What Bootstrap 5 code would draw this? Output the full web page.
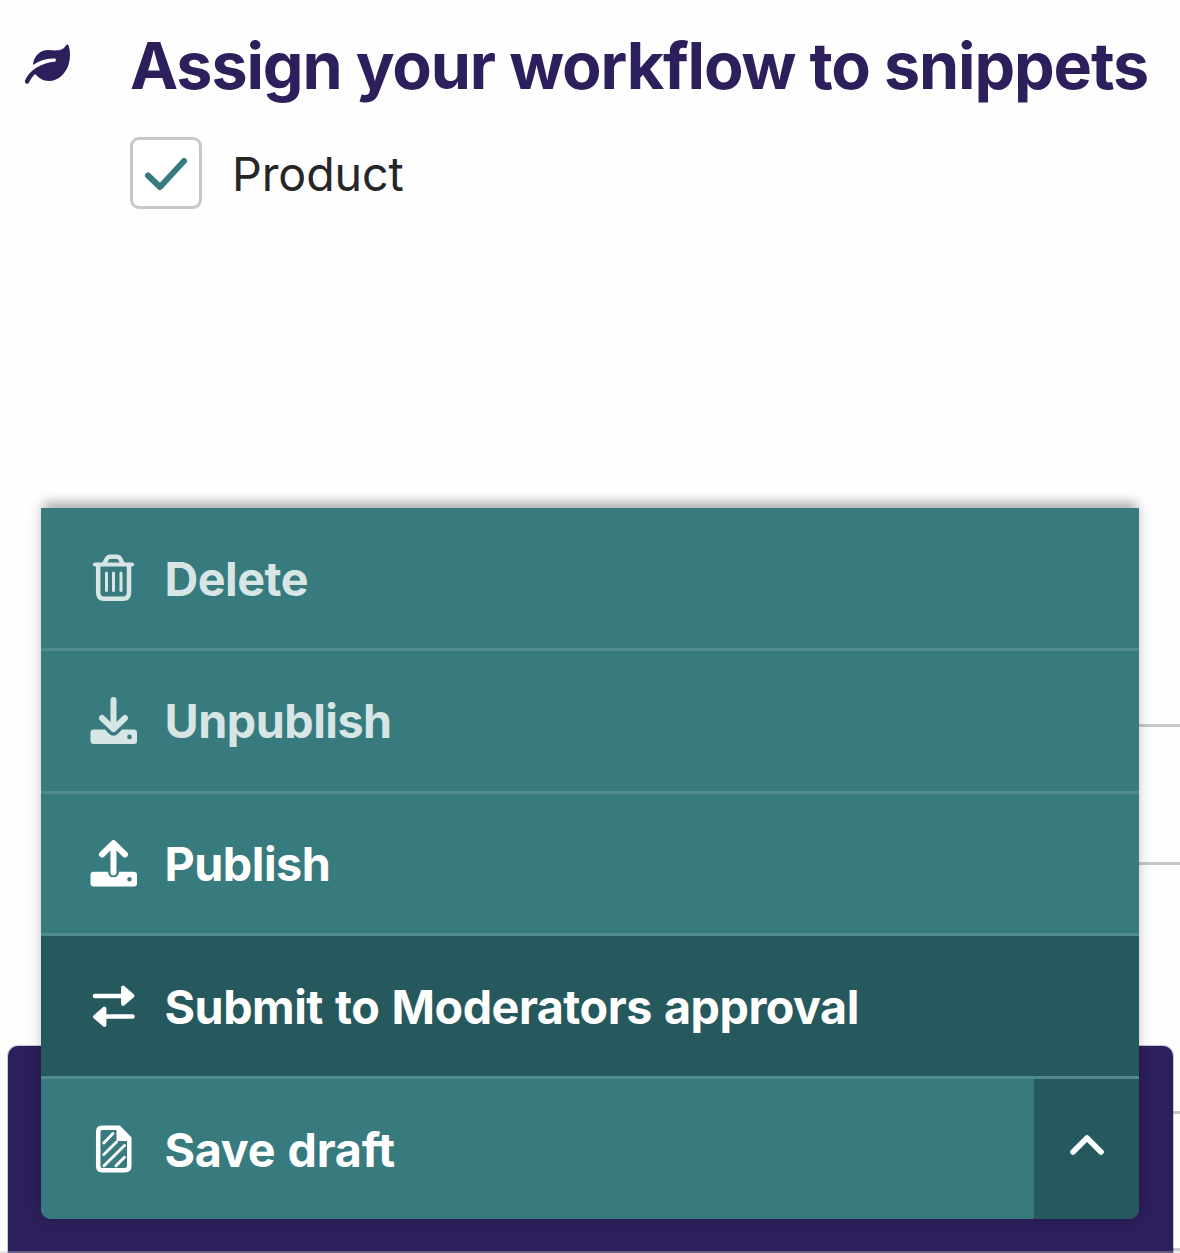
<!DOCTYPE html>
<html lang="en">
<head>
<meta charset="utf-8">
<meta name="viewport" content="width=device-width, initial-scale=1">
<title>Assign your workflow to snippets</title>
<link href="https://cdn.jsdelivr.net/npm/bootstrap@5.3.0/dist/css/bootstrap.min.css" rel="stylesheet">
<style>
  body { font-family: Inter, "Liberation Sans", sans-serif; background: #fefefe; color: #262626; }
  .editor { height: 1253px; }
  .panel-head { padding: 26px 0 0 24px; height: 137px; color: #2c1f5b; }
  .panel-head svg { margin: 17px 58px 0 0; }
  .panel-title { font-size: 64.6px; font-weight: 700; line-height: 80px; letter-spacing: -1.14px; white-space: nowrap; }
  .choice { margin-left: 130px; gap: 30px; height: 72px; }
  .choice-box { width: 72px; height: 72px; border: 3px solid #c8c8c8; border-radius: 9px; background: #fff; }
  .choice-label { font-size: 46.6px; line-height: 72px; padding-top: 2px; letter-spacing: -.1px; }
  .field-rows { margin: 515px 0 0 60px; }
  .field-row { border-top: 3px solid #c8c8c8; }
  .row-a { height: 138px; }
  .row-b { height: 249px; }
  .row-c { height: 137px; }
  .row-d { height: 5px; background: #ececec; }
  .footer-bar { left: 8px; right: 7px; top: 1046px; height: 207px; padding: 0 34px 0 33px; background: #2c1f5b; border-radius: 10px 10px 0 0; box-shadow: 0 0 0 1px rgba(44,31,91,.25); }
  .action-menu { margin-top: -538px; height: 711px; box-shadow: 0 -3px 15px rgba(0,0,0,.16), 0 -10px 10px -3px rgba(0,0,0,.19); border-radius: 0 0 10px 10px; background: #377b7e; }
  .menu-action { height: 142.75px; padding: 0 49px; border: 0; border-bottom: 3px solid #528b8d; background: #377b7e; color: #fff; font-size: 46.7px; font-weight: 650; line-height: 1; text-align: left; gap: 26px; letter-spacing: -.5px; word-spacing: 1.6px; }
  .menu-action.is-off { color: #d7e5e5; }
  .menu-action.is-active { background: #26595d; }
  .menu-action svg { width: 48px; height: 48px; flex: none; }
  .menu-action span { white-space: nowrap; padding: 2px 0 0 .5px; }
  .save-action { height: 140px; border-bottom: 0; border-right: 1px solid #4a7073; border-radius: 0 0 0 10px; flex: 1; }
  .save-action, .save-action span { letter-spacing: -.28px; }
  .toggle-action { width: 105px; height: 140px; border: 0; background: #26595d; border-radius: 0 0 10px 0; padding: 0; }
  .toggle-action svg { margin-top: -8px; }
  .edge-strip { left: 0; bottom: 0; width: 1173px; height: 2px; background: rgba(190,190,190,.38); }
</style>
<script src="https://cdn.jsdelivr.net/npm/bootstrap@5.3.0/dist/js/bootstrap.bundle.min.js"></script>
</head>
<body>
<main class="editor position-relative overflow-hidden">
  <header class="panel-head d-flex align-items-start">
    <svg width="48" height="42" viewBox="0 0 48 42" fill="none" aria-hidden="true">
      <path d="M41.500 3C42.500 1 44.200 .8 44.800 3C46.500 9 46.300 15 45 20C42.500 30 34.500 38 25 38C18.500 38 14.500 34.500 11 31C8 34 6.500 36.500 5 39.500C3.800 42 .2 40.800 1 37.500C5 28 17 19.500 31 18.800C32.300 18.500 32.300 15.800 31 15.600C23 15 15.500 17.500 9 22C9.500 13 16.500 7 24 7C32 7.500 38 8.500 41.500 3Z" fill="currentColor"/>
    </svg>
    <h1 class="panel-title m-0">Assign your workflow to snippets</h1>
  </header>
  <div class="choice d-flex align-items-center">
    <div class="choice-box d-flex" role="checkbox" aria-checked="true" aria-label="Product">
      <svg width="66" height="66" viewBox="0 0 66 66" fill="none" aria-hidden="true"><path d="M15 35.500L27 47L51 21" stroke="#377b7e" stroke-width="6" stroke-linecap="round" stroke-linejoin="round"/></svg>
    </div>
    <div class="choice-label">Product</div>
  </div>
  <div class="field-rows">
    <div class="field-row row-a"></div>
    <div class="field-row row-b"></div>
    <div class="field-row row-c"></div>
    <div class="field-row row-d"></div>
  </div>
  <footer class="footer-bar position-absolute">
    <div class="action-menu d-flex flex-column">
      <button class="menu-action is-off d-flex align-items-center" type="button">
        <svg viewBox="0 0 48 48" fill="none" stroke="currentColor" stroke-linecap="round" stroke-linejoin="round" aria-hidden="true"><path d="M5 10.500H42" stroke-width="4.200"/><path d="M8.200 11V38.500Q8.200 44.800 14 44.800H33Q39 44.800 39 38.500V11M14 10L17 4.500Q18 2.800 20 2.800H27Q29 2.800 30 4.500L33 10" stroke-width="4.500"/><path d="M16.500 19V36.500M23.500 19V36.500M31 19V36.500" stroke-width="3"/></svg>
        <span>Delete</span>
      </button>
      <button class="menu-action is-off d-flex align-items-center" type="button">
        <svg viewBox="0 0 48 48" fill="none" aria-hidden="true"><path fill-rule="evenodd" fill="currentColor" d="M3.500 32.500H15L19 36.800Q23.500 40.500 28 36.800L32 32.500H43.500Q47 32.500 47 35.500V44Q47 47 44 47H3.500Q.5 47 .5 44V35.500Q.5 32.500 3.500 32.500ZM39.500 37.600A2.300 2.300 0 1 0 39.500 42.200A2.300 2.300 0 1 0 39.500 37.600Z"/><path d="M23.500 3V32M12 21L23.500 32.200L35 21" stroke="currentColor" stroke-width="6" stroke-linecap="round" stroke-linejoin="round"/></svg>
        <span>Unpublish</span>
      </button>
      <button class="menu-action d-flex align-items-center" type="button">
        <svg viewBox="0 0 48 48" fill="none" aria-hidden="true"><path fill-rule="evenodd" fill="currentColor" d="M3.500 32.800H18Q18.500 38.300 23.500 38.300Q28.500 38.300 29 32.800H43.500Q47 32.800 47 35.800V44.500Q47 47.500 44 47.500H3.500Q.5 47.500 .5 44.500V35.800Q.5 32.800 3.500 32.800ZM39.500 38A2.300 2.300 0 1 0 39.500 42.600A2.300 2.300 0 1 0 39.500 38Z"/><path d="M23.500 33.500V5M12 15.500L23.500 4.200L35 15.500" stroke="currentColor" stroke-width="6" stroke-linecap="round" stroke-linejoin="round"/></svg>
        <span>Publish</span>
      </button>
      <button class="menu-action is-active d-flex align-items-center" type="button">
        <svg viewBox="0 0 48 48" fill="currentColor" stroke="currentColor" stroke-linecap="round" stroke-linejoin="round" aria-hidden="true"><path d="M5 14H34M14 34.500H42.500" stroke-width="4.600"/><path d="M33 5.500V22L42.500 13.800ZM14.500 26.500V43L5 34.700Z" stroke-width="3.800"/></svg>
        <span>Submit to Moderators approval</span>
      </button>
      <div class="d-flex">
        <button class="menu-action save-action d-flex align-items-center" type="button">
          <svg viewBox="0 0 48 48" fill="none" stroke="currentColor" stroke-linecap="round" stroke-linejoin="round" aria-hidden="true"><path d="M12 2.800H29L39.300 13.300V40.800Q39.300 45.200 35 45.200H12Q8.200 45.200 8.200 40.800V6.800Q8.200 2.800 12 2.800Z" stroke-width="4.500"/><path d="M28 4V14.500H38Z" fill="currentColor" stroke-width="3"/><path d="M13.800 18L23 8.500M13.800 29.500L26.500 17M14 40.700L34.500 20.500M26 40.700L34.500 32.200" stroke-width="2.900"/></svg>
          <span>Save draft</span>
        </button>
        <button class="toggle-action d-flex align-items-center justify-content-center" type="button" aria-label="More actions">
          <svg width="36" height="22" viewBox="0 0 36 22" fill="none" aria-hidden="true"><path d="M4 18L18 4L32 18" stroke="#fff" stroke-width="5.600" stroke-linecap="round" stroke-linejoin="round"/></svg>
        </button>
      </div>
    </div>
  </footer>
  <div class="edge-strip position-absolute"></div>
</main>
</body>
</html>
